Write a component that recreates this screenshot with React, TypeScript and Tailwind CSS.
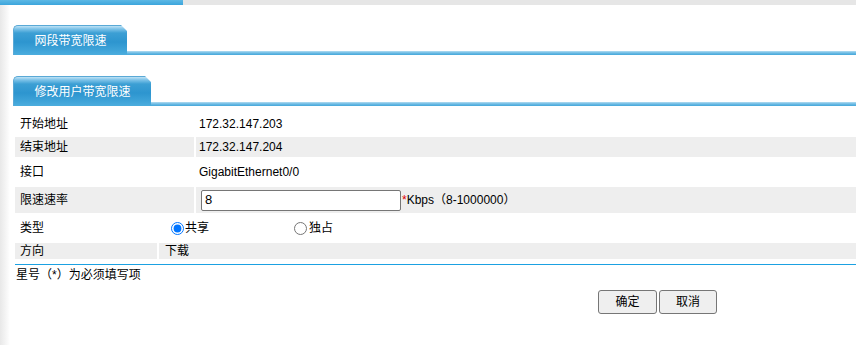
import React from "react";

const font = { fontFamily: '"Liberation Sans", "Noto Sans CJK SC", sans-serif' };

function Tab({ label, width }: { label: string; width: string }) {
  return (
    <div className="flex items-end h-[30px]">
      <div
        className={`${width} h-[30px] rounded-tl-[5px] flex items-center justify-center text-white text-[12px] border-t border-l border-[#5aa9d6] [clip-path:polygon(0_0,calc(100%-6px)_0,100%_6px,100%_100%,0_100%)] bg-[linear-gradient(to_bottom,#bfe2f5_0px,#7cc2e8_3px,#3c9fd4_7px,#2d95cf_16px,#3ea3d8_24px,#4eafdf_30px)]`}
      >
        {label}
      </div>
      <div className="flex-1 h-[4px] bg-[linear-gradient(to_bottom,#b4dcf1,#6cbbe4_50%,#45a7da)]" />
    </div>
  );
}

export default function App() {
  return (
    <div
      className="w-[856px] h-[345px] bg-white text-black text-[12px] overflow-hidden flex flex-col"
      style={font}
    >
      <div className="flex h-[5px] shrink-0">
        <div className="w-[183px] bg-[linear-gradient(to_bottom,#5db8e4,#3ba5dc)]" />
        <div className="flex-1 bg-[#e6e6e6]" />
      </div>
      <div className="flex-1 pl-[13px] bg-[linear-gradient(to_right,#e8e8e8_0px,#f3f3f3_5px,#ffffff_10px)]">
        <div className="mt-[20px]">
          <Tab label="网段带宽限速" width="w-[114px]" />
        </div>
        <div className="mt-[21px]">
          <Tab label="修改用户带宽限速" width="w-[138px]" />
        </div>
        <div className="pl-[2px] flex flex-col">
          <div className="flex gap-[2px] h-[27px] mt-[4px] items-center">
            <div className="w-[179px] pl-[5px]">开始地址</div>
            <div className="flex-1 pl-[3px]">172.32.147.203</div>
          </div>
          <div className="flex gap-[2px] h-[20px]">
            <div className="w-[179px] pl-[5px] bg-[#eeeeee] flex items-center">结束地址</div>
            <div className="flex-1 pl-[3px] bg-[#eeeeee] flex items-center">172.32.147.204</div>
          </div>
          <div className="flex gap-[2px] h-[26px] mt-[2px] items-center">
            <div className="w-[179px] pl-[5px]">接口</div>
            <div className="flex-1 pl-[3px]">GigabitEthernet0/0</div>
          </div>
          <div className="flex gap-[2px] h-[26px] mt-[2px]">
            <div className="w-[179px] pl-[5px] bg-[#eeeeee] flex items-center">限速速率</div>
            <div className="flex-1 pl-[5px] bg-[#eeeeee] flex items-center">
              <div className="w-[200px] h-[21px] border border-[#767676] rounded-[2px] bg-white flex items-center pl-[3px] text-[13px]">
                8
              </div>
              <span className="text-[#e00000] ml-[1px]">*</span>
              <span>Kbps（8-1000000）</span>
            </div>
          </div>
          <div className="flex h-[26px] mt-[2px] items-center">
            <div className="w-[156px] pl-[5px]">类型</div>
            <label className="flex items-center w-[123px]">
              <input type="radio" name="t" defaultChecked className="m-0 w-[13px] h-[13px]" />
              <span className="ml-[1px]">共享</span>
            </label>
            <label className="flex items-center">
              <input type="radio" name="t" className="m-0 w-[13px] h-[13px]" />
              <span className="ml-[2px]">独占</span>
            </label>
          </div>
          <div className="flex gap-[2px] h-[16px] mt-[2px]">
            <div className="w-[142px] pl-[5px] bg-[#eeeeee] flex items-center">方向</div>
            <div className="flex-1 pl-[6px] bg-[#eeeeee] flex items-center">下载</div>
          </div>
          <div className="h-[1px] mt-[5px] bg-[#1ba1e2]" />
          <div className="h-[16px] mt-[2px] pl-[1px] flex items-center">星号（*）为必须填写项</div>
          <div className="flex mt-[7px] pl-[583px] gap-[2px]">
            <button className="w-[59px] h-[24px] bg-[#efefef] border border-[#767676] rounded-[3px] text-[12px] flex items-center justify-center">
              确定
            </button>
            <button className="w-[58px] h-[24px] bg-[#efefef] border border-[#767676] rounded-[3px] text-[12px] flex items-center justify-center">
              取消
            </button>
          </div>
        </div>
      </div>
    </div>
  );
}
